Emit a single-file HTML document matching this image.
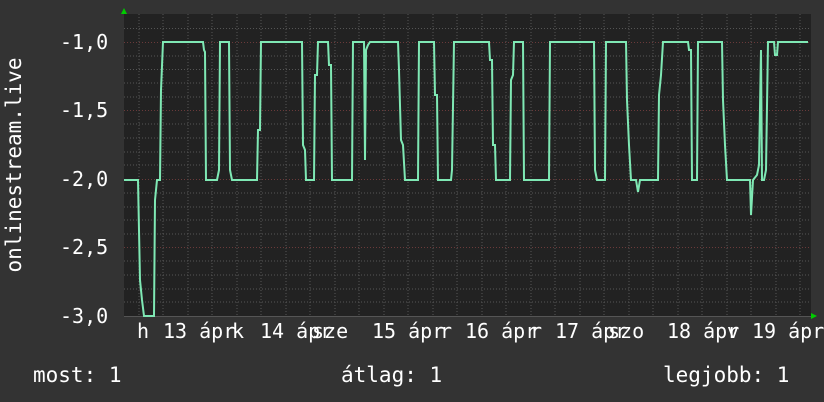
<!DOCTYPE html>
<html><head><meta charset="utf-8"><style>
body{margin:0;width:824px;height:402px;background:#333;overflow:hidden;position:relative;font-family:"DejaVu Sans Mono","Liberation Mono",monospace;color:#fff;font-size:20px}
.t{position:absolute;white-space:pre;line-height:20px}
</style></head><body>
<svg width="824" height="402" style="position:absolute;left:0;top:0">
<rect x="124" y="14" width="687" height="302" fill="#222"/>
<g stroke="#555" stroke-dasharray="1,2" stroke-width="1">
<line x1="124" x2="811" y1="28.5" y2="28.5"/><line x1="124" x2="811" y1="56" y2="56"/><line x1="124" x2="811" y1="69.5" y2="69.5"/><line x1="124" x2="811" y1="83" y2="83"/><line x1="124" x2="811" y1="97" y2="97"/>
<line x1="124" x2="811" y1="124" y2="124"/><line x1="124" x2="811" y1="138" y2="138"/><line x1="124" x2="811" y1="152" y2="152"/><line x1="124" x2="811" y1="165" y2="165"/>
<line x1="124" x2="811" y1="193" y2="193"/><line x1="124" x2="811" y1="207" y2="207"/><line x1="124" x2="811" y1="220" y2="220"/><line x1="124" x2="811" y1="234" y2="234"/>
<line x1="124" x2="811" y1="261" y2="261"/><line x1="124" x2="811" y1="275" y2="275"/><line x1="124" x2="811" y1="289" y2="289"/><line x1="124" x2="811" y1="302" y2="302"/>
</g>
<g stroke="#555" stroke-dasharray="1,2">
<line x1="139" x2="139" y1="14" y2="316"/><line x1="163" x2="163" y1="14" y2="316"/><line x1="188" x2="188" y1="14" y2="316"/><line x1="212" x2="212" y1="14" y2="316"/><line x1="237" x2="237" y1="14" y2="316"/><line x1="261" x2="261" y1="14" y2="316"/><line x1="286" x2="286" y1="14" y2="316"/><line x1="310" x2="310" y1="14" y2="316"/><line x1="335" x2="335" y1="14" y2="316"/><line x1="359" x2="359" y1="14" y2="316"/><line x1="384" x2="384" y1="14" y2="316"/><line x1="408" x2="408" y1="14" y2="316"/><line x1="433" x2="433" y1="14" y2="316"/><line x1="457" x2="457" y1="14" y2="316"/><line x1="482" x2="482" y1="14" y2="316"/><line x1="506" x2="506" y1="14" y2="316"/><line x1="531" x2="531" y1="14" y2="316"/><line x1="555" x2="555" y1="14" y2="316"/><line x1="580" x2="580" y1="14" y2="316"/><line x1="604" x2="604" y1="14" y2="316"/><line x1="629" x2="629" y1="14" y2="316"/><line x1="653" x2="653" y1="14" y2="316"/><line x1="678" x2="678" y1="14" y2="316"/><line x1="702" x2="702" y1="14" y2="316"/><line x1="727" x2="727" y1="14" y2="316"/><line x1="751" x2="751" y1="14" y2="316"/><line x1="776" x2="776" y1="14" y2="316"/><line x1="800" x2="800" y1="14" y2="316"/>
</g>
<g stroke="#6a3a3a" stroke-dasharray="1,2">
<line x1="124" x2="811" y1="42.5" y2="42.5"/><line x1="124" x2="811" y1="110.5" y2="110.5"/><line x1="124" x2="811" y1="179.5" y2="179.5"/><line x1="124" x2="811" y1="247.5" y2="247.5"/>
</g>
<line x1="124" x2="811" y1="316.5" y2="316.5" stroke="#555"/>
<polygon points="121,14 127,14 124,8" fill="#0c0"/>
<polygon points="811,313 811,319 817,316" fill="#0c0"/>
<polyline fill="none" stroke="#7fe8b4" stroke-width="2" points="124,180 138,180 140,280 142,300 144,316 154,316 155,200 157,180 160,180 161,90 163,42 203,42 204,50 205,52 206,180 217,180 219,170 220,42 229,42 230,170 232,180 257,180 258,130 260,130 261,42 302,42 303,145 305,150 306,180 314,180 315,75 317,75 318,42 328,42 329,65 331,65 332,180 352,180 353,42 364,42 365,160 366,50 368,45 370,42 398,42 399,70 401,140 403,145 405,180 418,180 419,42 434,42 435,95 437,95 438,180 451,180 452,170 454,42 489,42 490,60 492,60 493,145 495,145 496,180 510,180 511,80 513,75 514,42 523,42 524,180 549,180 550,42 594,42 595,170 597,180 605,180 606,42 626,42 627,100 629,145 631,180 636,180 638,192 640,180 658,180 659,95 661,75 663,42 688,42 689,50 691,50 692,180 697,180 698,42 722,42 723,100 725,145 727,180 750,180 751,215 753,180 757,175 759,165 761,50 762,180 764,180 766,170 768,42 774,42 775,55 777,55 778,42 808,42"/>
</svg>
<div class="t" style="left:60px;top:32px">-1,0</div>
<div class="t" style="left:60px;top:100px">-1,5</div>
<div class="t" style="left:60px;top:169px">-2,0</div>
<div class="t" style="left:60px;top:237px">-2,5</div>
<div class="t" style="left:60px;top:306px">-3,0</div>
<div class="t" style="left:14px;top:165px;transform:translate(-50%,-50%) rotate(-90deg);font-size:21px">onlinestream.live</div>
<div class="t" style="left:137px;top:321px">h</div>
<div class="t" style="left:163px;top:321px">13 ápr</div>
<div class="t" style="left:232px;top:321px">k</div>
<div class="t" style="left:260px;top:321px">14 ápr</div>
<div class="t" style="left:312px;top:321px">sze</div>
<div class="t" style="left:372px;top:321px">15 ápr</div>
<div class="t" style="left:440px;top:321px">r</div>
<div class="t" style="left:465px;top:321px">16 ápr</div>
<div class="t" style="left:530px;top:321px">r</div>
<div class="t" style="left:555px;top:321px">17 ápr</div>
<div class="t" style="left:608px;top:321px">szo</div>
<div class="t" style="left:667px;top:321px">18 ápr</div>
<div class="t" style="left:727px;top:321px">v</div>
<div class="t" style="left:752px;top:321px">19 ápr</div>
<div class="t" style="left:33px;top:365px;font-size:21px">most: 1</div>
<div class="t" style="left:341px;top:365px;font-size:21px">átlag: 1</div>
<div class="t" style="left:663px;top:365px;font-size:21px">legjobb: 1</div>
</body></html>
